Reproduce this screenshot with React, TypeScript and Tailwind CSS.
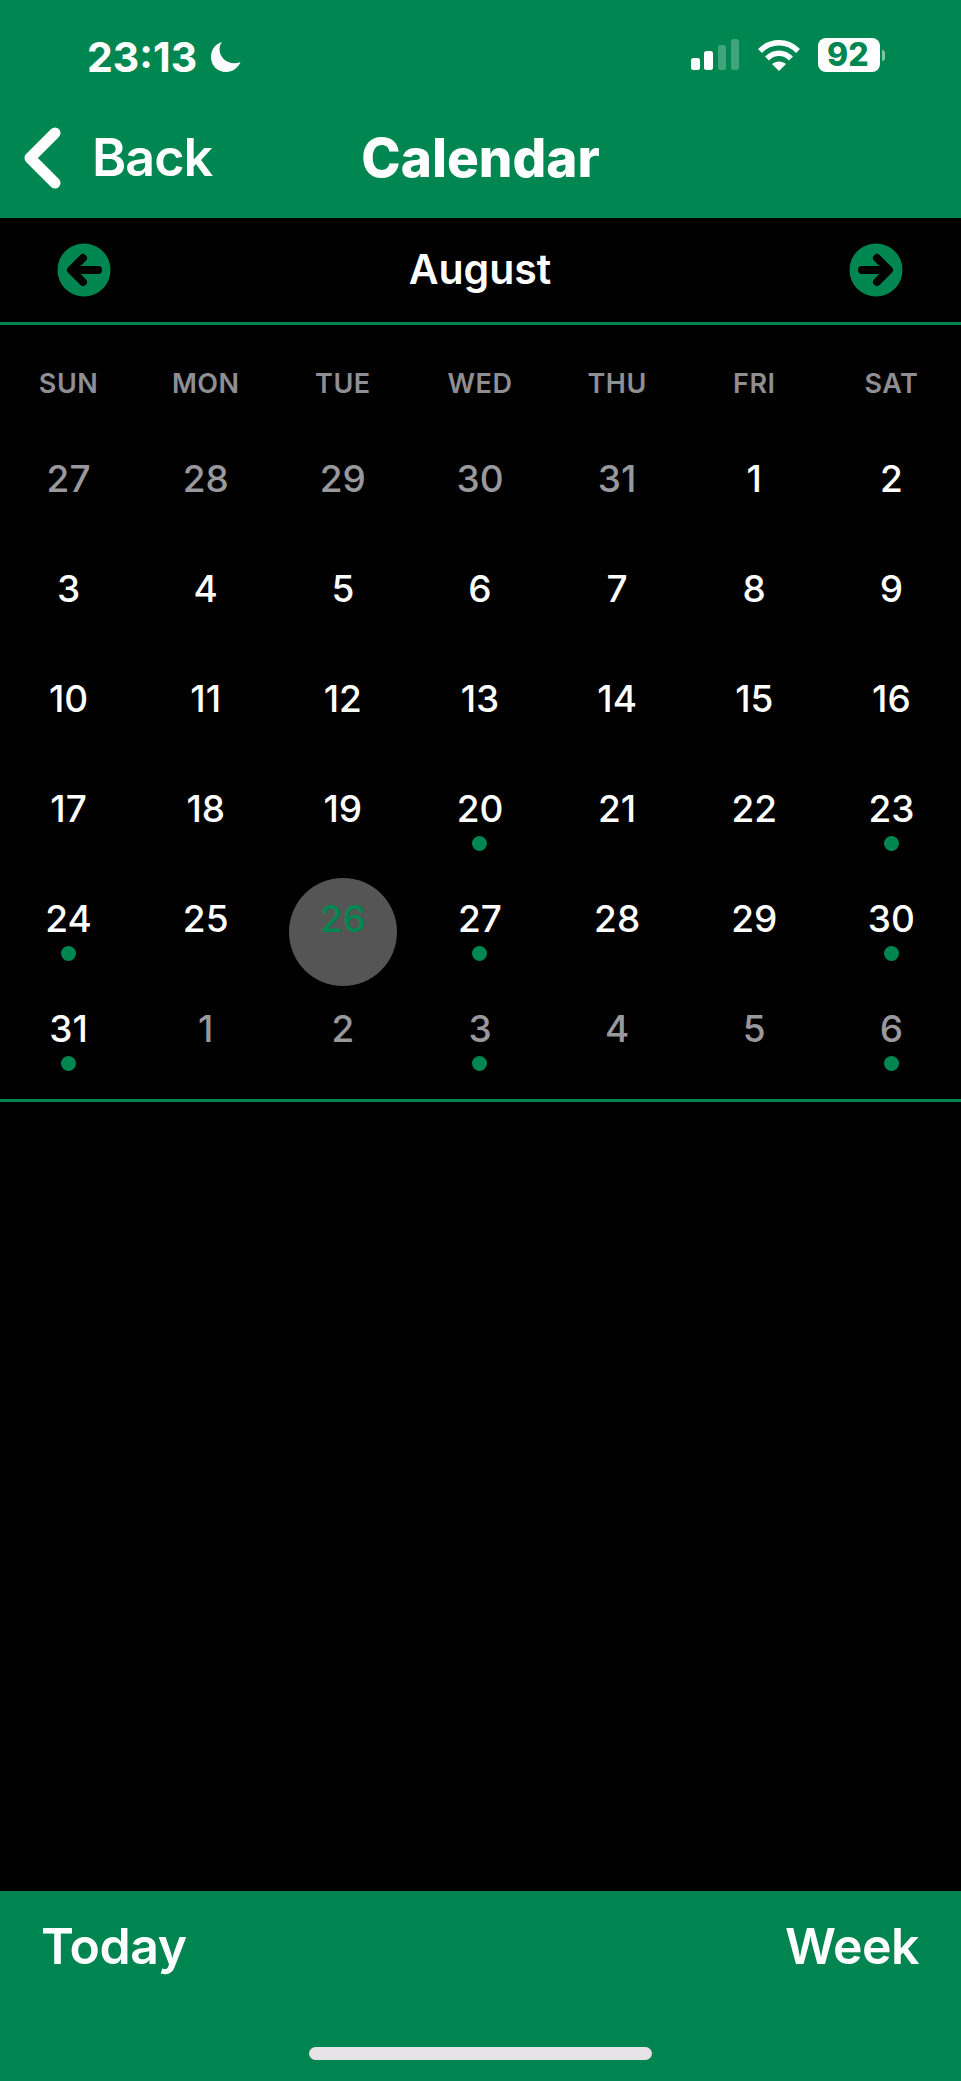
const weekdays = ['SUN', 'MON', 'TUE', 'WED', 'THU', 'FRI', 'SAT'];

type Day = { label: number; muted?: boolean; dot?: boolean; selected?: boolean };

const days: Day[] = [
  { label: 27, muted: true },
  { label: 28, muted: true },
  { label: 29, muted: true },
  { label: 30, muted: true },
  { label: 31, muted: true },
  { label: 1 },
  { label: 2 },
  ...[3, 4, 5, 6, 7, 8, 9, 10, 11, 12, 13, 14, 15, 16, 17, 18, 19].map((label) => ({ label })),
  { label: 20, dot: true },
  { label: 21 },
  { label: 22 },
  { label: 23, dot: true },
  { label: 24, dot: true },
  { label: 25 },
  { label: 26, selected: true },
  { label: 27, dot: true },
  { label: 28 },
  { label: 29 },
  { label: 30, dot: true },
  { label: 31, dot: true },
  { label: 1, muted: true },
  { label: 2, muted: true },
  { label: 3, muted: true, dot: true },
  { label: 4, muted: true },
  { label: 5, muted: true },
  { label: 6, muted: true, dot: true },
];

const ArrowButton = ({ direction }: { direction: 'left' | 'right' }) => (
  <svg width="54" height="54" viewBox="0 0 54 54">
    <circle cx="27" cy="27" r="26.5" fill="#008751" />
    {direction === 'left' ? (
      <path d="M41 27H15M26 15L14 27l12 12" fill="none" stroke="#000" strokeWidth="8" strokeLinecap="round" strokeLinejoin="round" />
    ) : (
      <path d="M13 27h26M28 15l12 12-12 12" fill="none" stroke="#000" strokeWidth="8" strokeLinecap="round" strokeLinejoin="round" />
    )}
  </svg>
);

const StatusBar = () => (
  <div className="flex h-[112px] items-start justify-between pl-[87px] pr-[76px] pt-[38px]">
    <div className="flex items-center gap-[13px]">
      <span className="text-[41px] font-bold leading-[38px] text-white">23:13</span>
      <svg width="32" height="32" viewBox="0 0 32 32">
        <path d="M12 1C5 3 1 9 1 16c0 8.500 6.500 15 15 15 6.500 0 12-4 14.500-10-2 .8-4 1.200-6 1.200C15.500 22.200 9.500 15.500 9.500 8c0-2.500 1-5 2.500-7z" fill="#fff" />
      </svg>
    </div>
    <div className="flex items-center gap-[17px]">
      {/* signal */}
      <svg width="50" height="32" viewBox="0 0 50 32">
        <rect x="1" y="19" width="9" height="12" rx="2.500" fill="#fff" />
        <rect x="14" y="12" width="9" height="19" rx="2.500" fill="#fff" />
        <rect x="28" y="6" width="8" height="25" rx="2.500" fill="#fff" fillOpacity="0.25" />
        <rect x="41" y="0" width="8" height="31" rx="2.500" fill="#fff" fillOpacity="0.25" />
      </svg>
      {/* wifi */}
      <svg width="44" height="33" viewBox="0 0 44 33" fill="none" stroke="#fff" strokeWidth="5.500">
        <path d="M3 12C13.500 1 30.500 1 41 12" />
        <path d="M10 19.500c7-7 17-7 24 0" />
        <path d="M22 32l-7-7c4-3.500 10-3.500 14 0z" fill="#fff" stroke="none" />
      </svg>
      {/* battery */}
      <div className="flex items-center gap-[2px]">
        <div className="flex h-[34px] w-[62px] items-center rounded-[8px] bg-white pl-[9px] text-[32px] font-extrabold leading-none text-[#008751]">
          92
        </div>
        <div className="h-[11px] w-[3px] rounded-r-full bg-white/50" />
      </div>
    </div>
  </div>
);

const DayCell = ({ day }: { day: Day }) => (
  <div className="flex h-[110px] justify-center pt-[2px]">
    <div
      className={`flex h-[108px] w-[108px] flex-col items-center rounded-full ${
        day.selected ? 'bg-[#555555]' : ''
      }`}
    >
      <span
        className={`mt-[19px] h-[44px] text-[37px] font-medium leading-[44px] ${
          day.selected ? 'text-[#008751]' : day.muted ? 'text-[#98989d]' : 'text-white'
        }`}
      >
        {day.label}
      </span>
      {day.dot && <span className="mt-[5px] h-[15px] w-[15px] rounded-full bg-[#008751]" />}
    </div>
  </div>
);

export default function App() {
  return (
    <div className="flex h-[2081px] w-[961px] flex-col bg-black font-['Inter',sans-serif] text-white">
      <header className="h-[218px] bg-[#008751]">
        <StatusBar />
        <div className="grid grid-cols-[1fr_auto_1fr] items-center pt-[14px]">
          <div className="flex items-center">
            <svg className="ml-[22px]" width="42" height="64" viewBox="0 0 42 64">
              <path d="M33 7L8 32l25 25" fill="none" stroke="#fff" strokeWidth="11" strokeLinecap="round" strokeLinejoin="round" />
            </svg>
            <span className="ml-[28px] text-[52px] font-semibold leading-[64px] tracking-[-1px]">Back</span>
          </div>
          <h1 className="text-[53px] font-extrabold leading-[64px]">Calendar</h1>
          <div />
        </div>
      </header>

      <div className="flex h-[107px] items-center justify-between border-b-[3px] border-[#008751] pl-[57px] pr-[58px]">
        <ArrowButton direction="left" />
        <span className="text-[41px] font-semibold">August</span>
        <ArrowButton direction="right" />
      </div>

      <div className="grid h-[111px] grid-cols-7 pr-[1px] pt-[45px]">
        {weekdays.map((name) => (
          <div key={name} className="text-center text-[27px] font-semibold leading-[28px] tracking-[0.5px] text-[#8e8e93]">
            {name}
          </div>
        ))}
      </div>

      <div className="grid grid-cols-7 border-b-[3px] border-[#008751] pb-[3px] pr-[1px]">
        {days.map((day, i) => (
          <DayCell key={i} day={day} />
        ))}
      </div>

      <div className="flex-1" />

      <footer className="relative h-[190px] bg-[#008450]">
        <div className="flex items-start justify-between pl-[41px] pr-[42px] pt-[23px]">
          <span className="text-[50px] font-semibold leading-[64px] tracking-[-0.5px]">Today</span>
          <span className="text-[50px] font-semibold leading-[64px] tracking-[-0.5px]">Week</span>
        </div>
        <div className="absolute bottom-[21px] left-[309px] h-[13px] w-[343px] rounded-full bg-[#e5e3e5]" />
      </footer>
    </div>
  );
}
